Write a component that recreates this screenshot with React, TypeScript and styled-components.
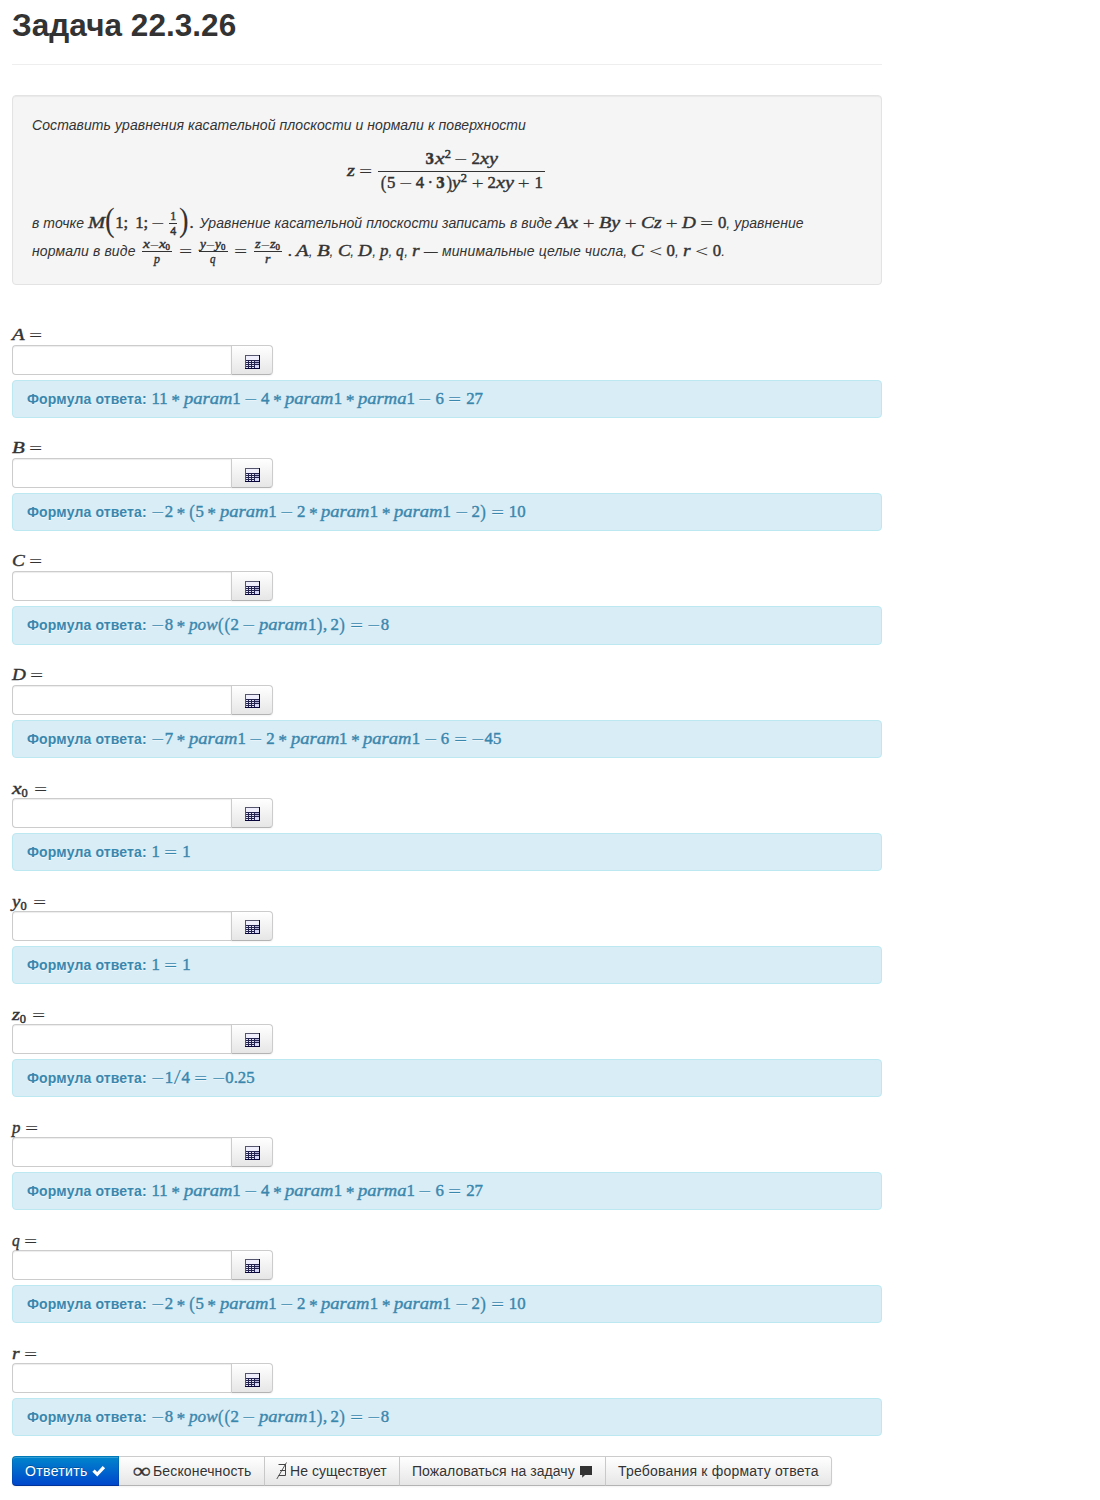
import React from "react";
import styled, { createGlobalStyle } from "styled-components";

const GlobalStyle = createGlobalStyle`
  body {
    margin: 0;
    background: #fff;
    color: #333;
    font: 14px/20px "Liberation Sans", Arial, sans-serif;
  }
`;

/* ---------- math typesetting ---------- */

// advance widths in em: [target, font's own]
const LETTERS: Record<string, [number, number]> = {
  A: [0.75, 0.611], B: [0.759, 0.611], C: [0.76, 0.667], D: [0.828, 0.722],
  M: [1.02, 0.833], a: [0.529, 0.5], m: [0.878, 0.722], o: [0.485, 0.5],
  p: [0.503, 0.5], q: [0.46, 0.5], r: [0.451, 0.389], w: [0.716, 0.667],
  x: [0.572, 0.444], y: [0.5, 0.444], z: [0.468, 0.389],
};

const MathRow = styled.span`
  display: inline-flex;
  align-items: baseline;
  font: normal 400 16.8px/20px "Liberation Serif", "Times New Roman", serif;
  letter-spacing: 0;
  white-space: pre;
`;
const Slot = styled.span<{ $w: number; $before?: number; $after?: number; $center?: boolean }>`
  display: inline-flex;
  flex: none;
  justify-content: ${(p) => (p.$center ? "center" : "flex-start")};
  width: ${(p) => p.$w}em;
  margin: 0 ${(p) => p.$after ?? 0}em 0 ${(p) => p.$before ?? 0}em;
`;
const Variable = styled.span<{ $scale: number }>`
  font-style: italic;
  transform: scaleX(${(p) => p.$scale});
  transform-origin: left;
  -webkit-text-stroke: 0.4px currentColor;
`;
const Digits = styled.span<{ $bold?: boolean }>`
  font-weight: ${(p) => (p.$bold ? 700 : 400)};
  -webkit-text-stroke: 0.45px currentColor;
`;
const Operator = styled.span<{ $scale: number; $drop?: number }>`
  transform: translateY(${(p) => p.$drop ?? 0}em) scaleX(${(p) => p.$scale});
`;
const Slash = styled.span`
  transform: scale(1.5, 1.25);
`;
const Star = styled.span`
  transform: translateY(0.13em);
  -webkit-text-stroke: 0.4px currentColor;
`;
const Paren = styled.span`
  transform: scaleY(1.12);
  -webkit-text-stroke: 0.3px currentColor;
`;
const Small = styled.span<{ $shift: number }>`
  margin-right: ${(p) => (p.$shift > 0 ? 0.12 : 0)}em;
  font-size: 0.74em;
  line-height: 1;
  transform: translateY(${(p) => p.$shift}em);
  -webkit-text-stroke: 0.5px currentColor;
`;
const Fraction = styled.span<{ $before?: number }>`
  display: inline-flex;
  flex-direction: column;
  align-items: center;
  align-self: center;
  margin: 0 2px 0 ${(p) => p.$before ?? 2}px;
`;
const Numerator = styled.span<{ $small?: boolean }>`
  display: flex;
  align-items: baseline;
  box-sizing: border-box;
  justify-content: center;
  height: ${(p) => (p.$small ? 13 : 22)}px;
  padding: 0 ${(p) => (p.$small ? 1.2 : 2)}px;
  font-size: ${(p) => (p.$small ? 11.9 : 16.8)}px;
  line-height: ${(p) => (p.$small ? 12 : 20)}px;
`;
const Bar = styled.span`
  align-self: stretch;
  height: 1px;
  background: currentColor;
`;
const Denominator = styled(Numerator)`
  padding-top: 1px;
`;
const BigParen = styled.span`
  align-self: center;
  width: 10px;
  font-size: 34px;
  line-height: 28px;
  transform: translateY(-3px) scaleX(0.85);
  transform-origin: left;
`;
const FullStop = styled.span<{ $before: number; $after: number }>`
  margin: 0 ${(p) => p.$after}px 0 ${(p) => p.$before}px;
  -webkit-text-stroke: 0.45px currentColor;
`;

function Tex({ src, script }: { src: string; script?: boolean }) {
  const tokens = src.match(/[A-Za-z]+|[\d.]+|_\d|\^\d|#\d|./g) ?? [];
  const k = script ? 0 : 1;
  return (
    <>
      {tokens.map((t, i) => {
        const prev = tokens[i - 1];
        if (/^[A-Za-z]/.test(t)) {
          const w = [...t].reduce((s, c) => s + LETTERS[c][0], 0);
          const own = [...t].reduce((s, c) => s + LETTERS[c][1], 0);
          return (
            <Slot key={i} $w={w}>
              <Variable $scale={w / own}>{t}</Variable>
            </Slot>
          );
        }
        if (/^[\d.]/.test(t)) return <Digits key={i}>{t}</Digits>;
        if (t[0] === "#") return <Slot key={i} $w={0.575}><Digits $bold>{t[1]}</Digits></Slot>;
        if (t[0] === "_") return <Small key={i} $shift={0.22}>{t[1]}</Small>;
        if (t[0] === "^") return <Small key={i} $shift={-0.5}>{t[1]}</Small>;
        if (t === "*")
          return (
            <Slot key={i} $w={0.5} $before={0.222} $after={0.222} $center>
              <Star>*</Star>
            </Slot>
          );
        if (t === "·")
          return (
            <Slot key={i} $w={0.278} $before={0.222} $after={0.222} $center>
              <Digits>·</Digits>
            </Slot>
          );
        if (t === "−" || t === "+") {
          const unary = !prev || "=(;".includes(prev);
          const gap = unary ? 0 : 0.222 * k;
          return (
            <Slot key={i} $w={0.778} $before={gap} $after={gap} $center>
              <Operator $scale={t === "−" ? 1.4 : 1.3} $drop={0.05}>{t}</Operator>
            </Slot>
          );
        }
        if (t === "=" || t === "<")
          return (
            <Slot key={i} $w={0.778} $before={0.278} $after={0.278} $center>
              <Operator $scale={1.4} $drop={0.05}>{t}</Operator>
            </Slot>
          );
        if (t === "(" || t === ")")
          return <Slot key={i} $w={0.389} $center><Paren>{t}</Paren></Slot>;
        if (t === "/") return <Slot key={i} $w={0.5} $center><Slash>/</Slash></Slot>;
        if (t === "," || t === ";")
          return <Slot key={i} $w={0.278} $after={0.167}><Digits>{t}</Digits></Slot>;
        return <span key={i}>{t}</span>;
      })}
    </>
  );
}

const M = ({ src }: { src: string }) => (
  <MathRow><Tex src={src} /></MathRow>
);

const SmallFraction = ({ top, bottom, before }: { top: string; bottom: string; before?: number }) => (
  <Fraction $before={before}>
    <Numerator $small><Tex src={top} script /></Numerator>
    <Bar />
    <Denominator $small><Tex src={bottom} script /></Denominator>
  </Fraction>
);

/* ---------- page ---------- */

const Page = styled.main`
  width: 870px;
  padding: 5px 0 14px 12px;
`;
const PageHeader = styled.header`
  padding-bottom: 19px;
  margin-bottom: 30px;
  border-bottom: 1px solid #eee;
`;
const Title = styled.h2`
  margin: 0;
  font-size: 31.5px;
  line-height: 40px;
  letter-spacing: 0.04px;
`;
const Well = styled.section`
  box-sizing: border-box;
  height: 190px;
  margin-bottom: 40px;
  padding: 19px;
  background: #f5f5f5;
  border: 1px solid #e3e3e3;
  border-radius: 4px;
  box-shadow: inset 0 1px 1px rgba(0, 0, 0, 0.05);
  font-style: italic;
  letter-spacing: 0.08px;
`;
const Lead = styled.div`
  height: 20px;
`;
const Display = styled.div`
  display: flex;
  justify-content: center;
  box-sizing: border-box;
  height: 74px;
  padding: 14px 0 16px;
`;
const DisplayMath = styled(MathRow)`
  align-items: center;
`;
const Line = styled.div`
  display: flex;
  align-items: baseline;
  height: 28px;
  line-height: 28px;
  white-space: pre;
  & > ${MathRow} {
    line-height: 28px;
  }
`;
const Phrase = styled.span<{ $spacing: number }>`
  letter-spacing: ${(p) => p.$spacing}px;
`;

const Question = styled.div`
  margin-bottom: 20px;
`;
const Label = styled.label<{ $lowered?: boolean }>`
  display: block;
  box-sizing: border-box;
  height: 20px;
  padding-top: ${(p) => (p.$lowered ? 0.5 : 0)}px;
`;
const InputAppend = styled.div`
  display: flex;
  margin-bottom: 5px;
`;
const AnswerInput = styled.input`
  box-sizing: border-box;
  width: 219px;
  height: 30px;
  margin: 0;
  padding: 4px 6px;
  border: 1px solid #ccc;
  border-right: 0;
  border-radius: 4px 0 0 4px;
  box-shadow: inset 0 1px 1px rgba(0, 0, 0, 0.075);
`;
const ButtonBase = styled.button`
  display: flex;
  align-items: center;
  box-sizing: border-box;
  height: 30px;
  margin: 0;
  padding: 0;
  color: #333;
  font: 14px/20px "Liberation Sans", Arial, sans-serif;
  white-space: nowrap;
  text-shadow: 0 1px 1px rgba(255, 255, 255, 0.75);
  background: linear-gradient(#fff, #e6e6e6);
  border: 1px solid #ccc;
  border-bottom-color: #b3b3b3;
  box-shadow: inset 0 1px 0 rgba(255, 255, 255, 0.2), 0 1px 2px rgba(0, 0, 0, 0.05);
`;
const CalcButton = styled(ButtonBase)<{ $raised?: boolean }>`
  width: 42px;
  padding: ${(p) => (p.$raised ? 2 : 4)}px 0 0 13px;
  border-radius: 0 4px 4px 0;
`;
const Alert = styled.div<{ $tall?: boolean }>`
  display: flex;
  align-items: baseline;
  box-sizing: border-box;
  height: ${(p) => (p.$tall ? 39 : 38)}px;
  padding: 8px 14px;
  color: #3a87ad;
  background: #d9edf7;
  border: 1px solid #bce8f1;
  border-radius: 4px;
  text-shadow: 0 1px 0 rgba(255, 255, 255, 0.5);
`;
const AlertTitle = styled.strong`
  width: 124.6px;
  letter-spacing: 0.15px;
  white-space: nowrap;
`;

const ButtonGroup = styled.div`
  display: flex;
`;
const GroupButton = styled(ButtonBase)<{ $w: number; $pad: number; $spacing: number }>`
  width: ${(p) => p.$w}px;
  padding-left: ${(p) => p.$pad}px;
  letter-spacing: ${(p) => p.$spacing}px;
  border-left: 0;
  &:last-child {
    border-radius: 0 4px 4px 0;
  }
`;
const PrimaryButton = styled(ButtonBase)`
  width: 107px;
  padding-left: 12px;
  gap: 4px;
  letter-spacing: 0.35px;
  color: #fff;
  text-shadow: 0 -1px 0 rgba(0, 0, 0, 0.25);
  background: linear-gradient(#08c, #04c) border-box;
  border-color: rgba(0, 0, 0, 0.1) rgba(0, 0, 0, 0.1) rgba(0, 0, 0, 0.25);
  border-radius: 4px 0 0 4px;
`;
const InfinitySign = styled.span`
  width: 26px;
  margin-left: -5px;
  font: 22px/16px "Liberation Serif", serif;
  transform: scaleX(1.15);
  transform-origin: left;
  -webkit-text-stroke: 0.3px currentColor;
`;

const CalculatorIcon = () => (
  <svg width="15" height="14" viewBox="0 0 15 14" shapeRendering="crispEdges">
    <rect width="15" height="14" fill="#23224f" />
    <rect x="1" y="1" width="13" height="4" fill="#eeeefc" />
    {[6, 8, 10, 12].map((y) =>
      [1, 4, 7].map((x) => (
        <rect key={`${x}-${y}`} x={x} y={y} width="2" height="1" fill="#e6e6fa" />
      ))
    )}
    <rect x="10" y="6" width="4" height="1" fill="#b4b4dc" />
    <rect x="10" y="8" width="4" height="1" fill="#b4b4dc" />
    <rect x="10" y="10" width="4" height="3" fill="#d4d4f4" />
    <path d="M0 .5H15M.5 0V14" stroke="#55556e" />
    <path d="M14.5 0V14M0 13.5H15" stroke="#07053a" />
  </svg>
);
const CheckIcon = () => (
  <svg width="14" height="14" viewBox="0 0 14 14">
    <path d="M.4 7.7 2.7 5.4 5.2 7.9 10.7 2.1 13.1 4.3 5.3 12.5Z" fill="#fff" />
  </svg>
);
const CommentGlyph = styled.svg`
  margin: 1px 0 0 1.5px;
`;
const CommentIcon = () => (
  <CommentGlyph width="12" height="12" viewBox="0 0 12 12">
    <path d="M0 0H12V9H5L2.2 11.7V9H0Z" fill="#333" />
  </CommentGlyph>
);
const NotExistsIcon = () => (
  <svg width="14" height="18" viewBox="0 0 14 18" fill="none" stroke="#444">
    <path d="M2.5 2.5H9.5V13.5H2.5M4 8.5H9.5" />
    <path d="M10.5 .5 .8 17" strokeWidth=".9" />
  </svg>
);

const LINEAR = "11*param1−4*param1*parma1−6=27";
const MIXED = "−2*(5*param1−2*param1*param1−2)=10";
const POWER = "−8*pow((2−param1),2)=−8";

const questions = [
  { name: "A", formula: LINEAR },
  { name: "B", formula: MIXED },
  { name: "C", formula: POWER, tall: true },
  { name: "D", formula: "−7*param1−2*param1*param1−6=−45", raised: true },
  { name: "x_0", formula: "1=1", raised: true, lowered: true },
  { name: "y_0", formula: "1=1", raised: true, lowered: true },
  { name: "z_0", formula: "−1/4=−0.25", raised: true, lowered: true },
  { name: "p", formula: LINEAR, raised: true, lowered: true },
  { name: "q", formula: MIXED, raised: true, lowered: true },
  { name: "r", formula: POWER, lowered: true },
];

export default function App() {
  return (
    <Page>
      <GlobalStyle />
      <PageHeader>
        <Title>Задача 22.3.26</Title>
      </PageHeader>

      <Well>
        <Lead>Составить уравнения касательной плоскости и нормали к поверхности</Lead>
        <Display>
          <DisplayMath>
            <Tex src="z=" />
            <Fraction $before={1}>
              <Numerator><Tex src="#3x^2−2xy" /></Numerator>
              <Bar />
              <Denominator><Tex src="(5−4·#3)y^2+2xy+1" /></Denominator>
            </Fraction>
          </DisplayMath>
        </Display>
        <Line>
          <span>в точке </span>
          <MathRow>
            <Tex src="M" />
            <BigParen>(</BigParen>
            <Tex src="1; 1;−" />
            <SmallFraction top="1" bottom="4" before={5} />
            <BigParen>)</BigParen>
            <FullStop $before={0} $after={5.8}>.</FullStop>
          </MathRow>
          <span>Уравнение касательной плоскости записать в виде </span>
          <M src="Ax+By+Cz+D=0" />
          <span>, уравнение</span>
        </Line>
        <Line>
          <Phrase $spacing={0.13}>нормали в виде </Phrase>
          <MathRow>
            <SmallFraction top="x−x_0" bottom="p" />
            <Tex src="=" />
            <SmallFraction top="y−y_0" bottom="q" />
            <Tex src="=" />
            <SmallFraction top="z−z_0" bottom="r" />
            <FullStop $before={3.5} $after={4.4}>.</FullStop>
          </MathRow>
          {["A", "B", "C", "D", "p", "q"].map((n) => (
            <React.Fragment key={n}>
              <M src={n} />
              <span>, </span>
            </React.Fragment>
          ))}
          <M src="r" />
          <Phrase $spacing={0.15}> — минимальные целые числа, </Phrase>
          <M src="C<0" />
          <span>, </span>
          <M src="r<0" />
          <span>.</span>
        </Line>
      </Well>

      {questions.map((q) => (
        <Question key={q.name}>
          <Label $lowered={q.lowered}><M src={`${q.name}=`} /></Label>
          <InputAppend>
            <AnswerInput type="text" />
            <CalcButton $raised={q.raised}><CalculatorIcon /></CalcButton>
          </InputAppend>
          <Alert $tall={q.tall}>
            <AlertTitle>Формула ответа:</AlertTitle>
            <M src={q.formula} />
          </Alert>
        </Question>
      ))}

      <ButtonGroup>
        <PrimaryButton>Ответить <CheckIcon /></PrimaryButton>
        <GroupButton $w={146} $pad={13} $spacing={0.15}><InfinitySign>∞</InfinitySign>Бесконечность</GroupButton>
        <GroupButton $w={135} $pad={11} $spacing={0.06}><NotExistsIcon />Не существует</GroupButton>
        <GroupButton $w={206} $pad={12} $spacing={0.06}>Пожаловаться на задачу&nbsp;<CommentIcon /></GroupButton>
        <GroupButton $w={226} $pad={12} $spacing={0.2}>Требования к формату ответа</GroupButton>
      </ButtonGroup>
    </Page>
  );
}
